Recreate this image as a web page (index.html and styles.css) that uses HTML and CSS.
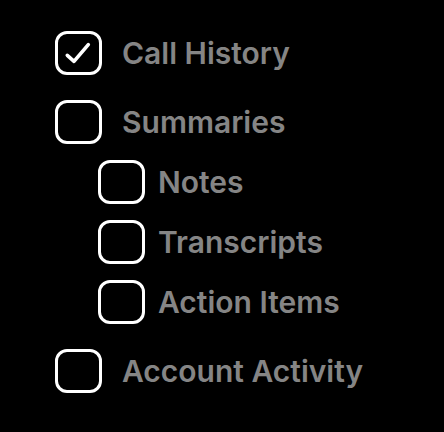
FILE: index.html
```html
<!DOCTYPE html>
<html>
<head>
<meta charset="utf-8">
<link rel="stylesheet" href="styles.css">
</head>
<body>
<div class="list">
  <div class="row">
    <span class="box checked">
      <svg width="40" height="38" viewBox="0 0 40 38"><path d="M9.3 21.3 L16 27.3 L30.3 10.7" fill="none" stroke="#fff" stroke-width="3.6" stroke-linecap="round" stroke-linejoin="round"/></svg>
    </span>
    <span class="label">Call History</span>
  </div>
  <div class="group">
    <div class="row">
      <span class="box"></span>
      <span class="label">Summaries</span>
    </div>
    <div class="sublist">
      <div class="row sub">
        <span class="box"></span>
        <span class="label">Notes</span>
      </div>
      <div class="row sub">
        <span class="box"></span>
        <span class="label">Transcripts</span>
      </div>
      <div class="row sub">
        <span class="box"></span>
        <span class="label">Action Items</span>
      </div>
    </div>
  </div>
  <div class="row">
    <span class="box"></span>
    <span class="label">Account Activity</span>
  </div>
</div>
</body>
</html>
```
FILE: styles.css
```css
html, body {
  margin: 0;
  background: #000;
}
body {
  width: 444px;
  height: 432px;
  overflow: hidden;
  font-family: Inter, "Noto Sans", sans-serif;
}
.list {
  display: flex;
  flex-direction: column;
  gap: 25px;
  padding: 31px 0 0 55px;
}
.group {
  display: flex;
  flex-direction: column;
  gap: 16px;
}
.sublist {
  display: flex;
  flex-direction: column;
  gap: 16px;
  padding-left: 43px;
}
.row {
  display: flex;
  align-items: center;
  gap: 20px;
  height: 44px;
}
.row.sub {
  gap: 13px;
}
.box {
  box-sizing: border-box;
  width: 47px;
  height: 44px;
  border: 3.5px solid #fff;
  border-radius: 12px;
  flex: none;
  display: flex;
}
.box svg {
  display: block;
}
.label {
  color: #858585;
  font-size: 30px;
  font-weight: 600;
  letter-spacing: 0;
  line-height: 1;
  margin-top: 0;
}
```
